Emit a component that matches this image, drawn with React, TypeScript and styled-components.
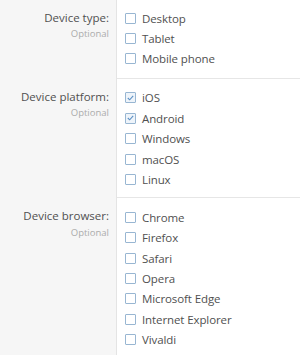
import React from 'react'
import styled, { createGlobalStyle } from 'styled-components'

const GlobalStyle = createGlobalStyle`
  html, body {
    margin: 0;
    padding: 0;
    background: #fff;
  }
  body {
    font-family: "Open Sans", "Noto Sans", sans-serif;
    color: #505050;
  }
`

const Form = styled.div`
  width: 300px;
  height: 355px;
  overflow: hidden;
  background: linear-gradient(to right, #f6f6f6 0, #f6f6f6 116px, #e4e4e4 116px, #e4e4e4 117px, #fff 117px);
`

const Section = styled.div`
  display: grid;
  grid-template-columns: 116px 1fr;
  & + & > div:last-child {
    border-top: 1px solid #e6e6e6;
  }
`

const Label = styled.div<{ top: number }>`
  padding: ${({ top }) => top}px 7px 0 0;
  text-align: right;
`

const Title = styled.div`
  font-size: 11.5px;
  line-height: 20.4px;
  color: #505050;
`

const Hint = styled.div`
  font-size: 9.5px;
  line-height: 12px;
  color: #acacac;
`

const Options = styled.div<{ top: number; bottom: number }>`
  margin-left: 1px;
  padding: ${({ top, bottom }) => `${top}px 0 ${bottom}px 8px`};
  display: flex;
  flex-direction: column;
`

const Option = styled.label`
  display: flex;
  align-items: center;
  gap: 6px;
  height: 20.4px;
  font-size: 11.5px;
  letter-spacing: -0.1px;
  color: #505050;
`

const Box = styled.span<{ checked?: boolean }>`
  box-sizing: border-box;
  flex: none;
  width: 11px;
  height: 11px;
  border: 1px solid #98b6d2;
  border-radius: 1px;
  background: ${({ checked }) => (checked ? '#eef4fa' : '#fff')};
  display: flex;
  align-items: center;
  justify-content: center;
`

const groups = [
  { title: 'Device type:', top: 8, bottom: 8.5, options: ['Desktop', 'Tablet', 'Mobile phone'], checked: [] as string[] },
  {
    title: 'Device platform:',
    top: 9,
    bottom: 7,
    options: ['iOS', 'Android', 'Windows', 'macOS', 'Linux'],
    checked: ['iOS', 'Android'],
  },
  {
    title: 'Device browser:',
    top: 9.5,
    bottom: 7,
    options: ['Chrome', 'Firefox', 'Safari', 'Opera', 'Microsoft Edge', 'Internet Explorer', 'Vivaldi'],
    checked: [] as string[],
  },
]

function Check() {
  return (
    <svg width="7" height="6" viewBox="0 0 7 6">
      <path d="M0.8 3 L2.7 4.8 L6.2 0.9" fill="none" stroke="#5b8fc4" strokeWidth="1.1" />
    </svg>
  )
}

export default function App() {
  return (
    <>
      <GlobalStyle />
      <Form>
        {groups.map((g) => (
          <Section key={g.title}>
            <Label top={g.top}>
              <Title>{g.title}</Title>
              <Hint>Optional</Hint>
            </Label>
            <Options top={g.top} bottom={g.bottom}>
              {g.options.map((o) => {
                const on = g.checked.includes(o)
                return (
                  <Option key={o}>
                    <Box checked={on}>{on && <Check />}</Box>
                    {o}
                  </Option>
                )
              })}
            </Options>
          </Section>
        ))}
      </Form>
    </>
  )
}
